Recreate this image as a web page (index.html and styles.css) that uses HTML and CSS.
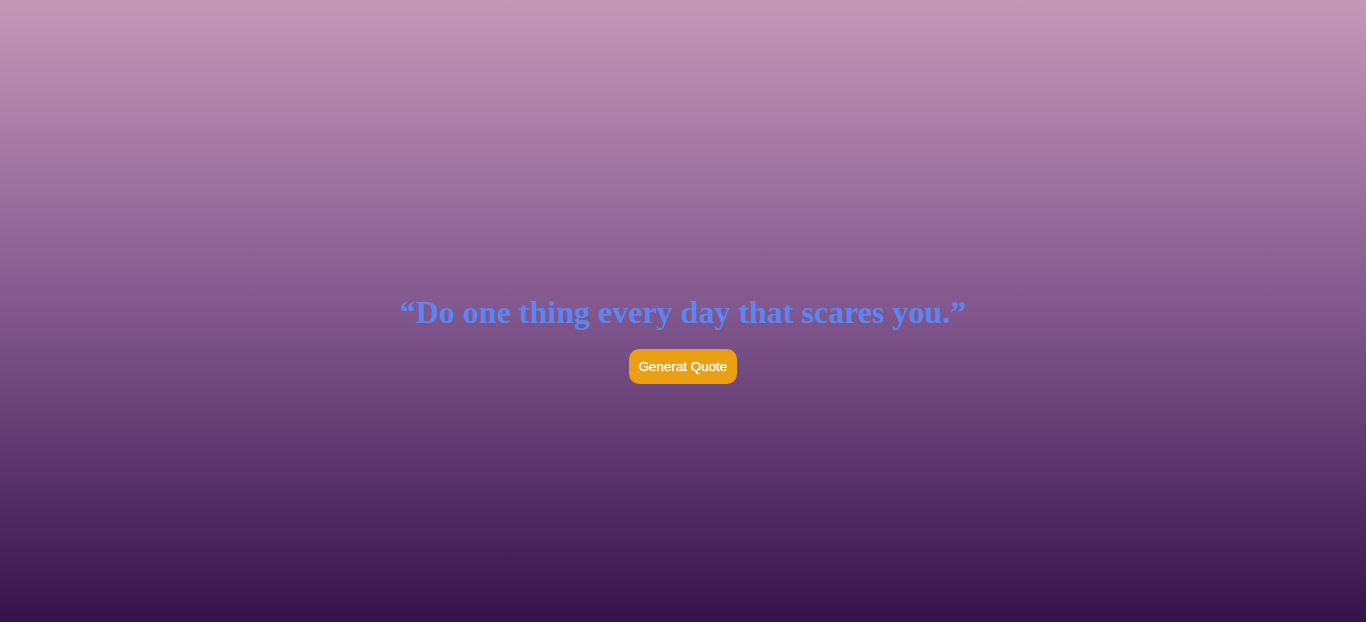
FILE: index.html
```html
<!DOCTYPE html>
<html>
<head>
<meta charset="utf-8">
<link rel="stylesheet" href="styles.css">
</head>
<body>
<main class="wrap">
  <h1 class="quote">“Do one thing every day that scares you.”</h1>
  <button class="btn">Generat Quote</button>
</main>
</body>
</html>
```
FILE: styles.css
```css
html, body { margin: 0; height: 100%; }
body {
  background: linear-gradient(to bottom, #c597b7 0%, #81578d 50%, #35134a 100%);
  font-family: "Liberation Serif", serif;
}
.wrap {
  min-height: 100%;
  display: flex;
  flex-direction: column;
  align-items: center;
  justify-content: center;
  padding-top: 56px;
  box-sizing: border-box;
}
.quote {
  margin: 0 0 18px;
  font-size: 32px;
  font-weight: bold;
  color: #5b86f2;
  line-height: 37px;
}
.btn {
  font-family: "Liberation Sans", Arial, sans-serif;
  font-size: 13.4px;
  color: #fff;
  -webkit-text-stroke: 0.25px #fff;
  background: #eb9f12;
  border: none;
  border-radius: 10px;
  width: 108px;
  height: 35px;
  padding: 0;
}
```
